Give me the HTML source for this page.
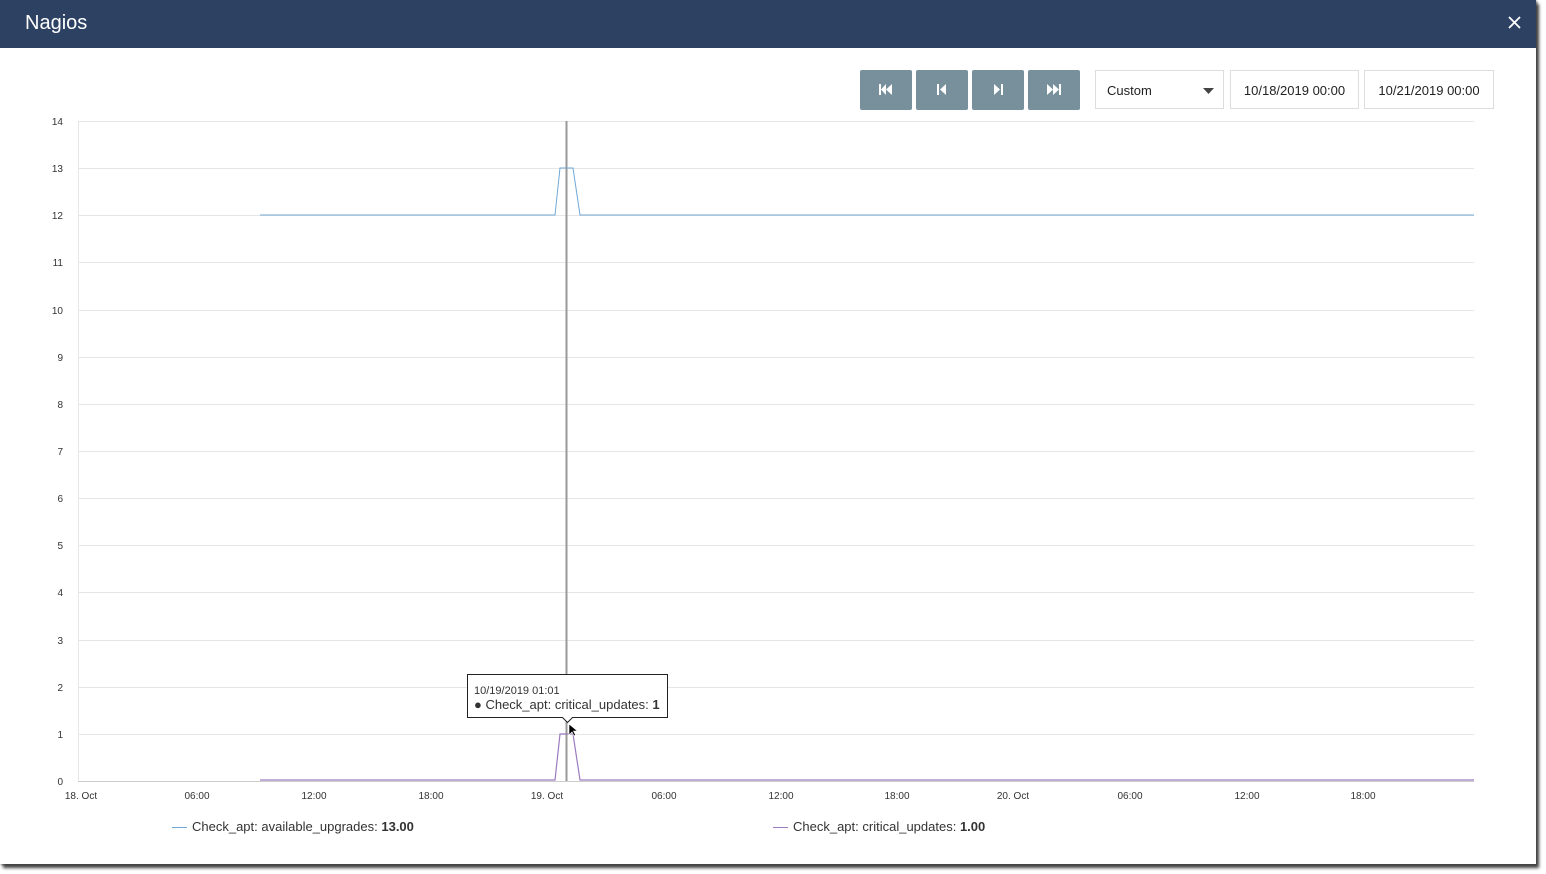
<!DOCTYPE html>
<html><head><meta charset="utf-8"><style>
html,body{margin:0;padding:0;background:#fff;width:1546px;height:874px;overflow:hidden;font-family:"Liberation Sans",sans-serif}
.modal{position:absolute;left:0;top:0;width:1536px;height:864px;background:#fff;box-shadow:3px 4px 3px #444, 1px 1px 2px #666}
.hdr{position:absolute;left:0;top:0;width:1536px;height:48px;background:#2d4163;color:#fff}
.hdr .t{position:absolute;left:25px;top:12px;font-size:20px}
.btn{position:absolute;top:70px;width:52px;height:40px;background:#78909c;border-radius:2px}
.box{position:absolute;top:70px;height:39px;border:1px solid #ddd;font-size:13px;color:#222;line-height:39px;box-sizing:border-box}
</style></head><body>
<div class="modal">
<div class="hdr"><div class="t">Nagios</div><svg style="position:absolute;left:1508px;top:16px" width="13" height="13"><path d="M1 1L12 12M12 1L1 12" stroke="#fff" stroke-width="1.8"/></svg></div>
<div class="btn" style="left:860px"><svg width="52" height="40"><rect x="19" y="14" width="2" height="11" fill="#fff"/><path d="M26 14v11l-5-5.5zM32 14v11l-6-5.5z" fill="#fff"/></svg></div>
<div class="btn" style="left:916px"><svg width="52" height="40"><rect x="21" y="14" width="2" height="11" fill="#fff"/><path d="M30 14v11l-6-5.5z" fill="#fff"/></svg></div>
<div class="btn" style="left:972px"><svg width="52" height="40"><rect x="29" y="14" width="2" height="11" fill="#fff"/><path d="M22 14v11l6-5.5z" fill="#fff"/></svg></div>
<div class="btn" style="left:1028px"><svg width="52" height="40"><rect x="31" y="14" width="2" height="11" fill="#fff"/><path d="M19 14v11l6-5.5zM25 14v11l6-5.5z" fill="#fff"/></svg></div>
<div class="box" style="left:1095px;width:129px;padding-left:11px">Custom<svg style="position:absolute;left:107px;top:17px" width="11" height="6"><path d="M0 0h11l-5.5 6z" fill="#444"/></svg></div>
<div class="box" style="left:1230px;width:129px;text-align:center">10/18/2019 00:00</div>
<div class="box" style="left:1364px;width:130px;text-align:center">10/21/2019 00:00</div>
<svg style="position:absolute;left:0;top:0" width="1536" height="864" font-family="Liberation Sans, sans-serif" font-size="10" fill="#333">
<g stroke="#e6e6e6" stroke-width="1">
<line x1="78" y1="121.5" x2="1474" y2="121.5"/><line x1="78" y1="168.5" x2="1474" y2="168.5"/><line x1="78" y1="215.5" x2="1474" y2="215.5"/><line x1="78" y1="262.5" x2="1474" y2="262.5"/><line x1="78" y1="310.5" x2="1474" y2="310.5"/><line x1="78" y1="357.5" x2="1474" y2="357.5"/><line x1="78" y1="404.5" x2="1474" y2="404.5"/><line x1="78" y1="451.5" x2="1474" y2="451.5"/><line x1="78" y1="498.5" x2="1474" y2="498.5"/><line x1="78" y1="545.5" x2="1474" y2="545.5"/><line x1="78" y1="592.5" x2="1474" y2="592.5"/><line x1="78" y1="640.5" x2="1474" y2="640.5"/><line x1="78" y1="687.5" x2="1474" y2="687.5"/><line x1="78" y1="734.5" x2="1474" y2="734.5"/>
<line x1="78.5" y1="121" x2="78.5" y2="781"/>
</g>
<line x1="78" y1="781.5" x2="1474" y2="781.5" stroke="#ccc"/>
<g text-anchor="end"><text x="63" y="125">14</text><text x="63" y="172">13</text><text x="63" y="219">12</text><text x="63" y="266">11</text><text x="63" y="314">10</text><text x="63" y="361">9</text><text x="63" y="408">8</text><text x="63" y="455">7</text><text x="63" y="502">6</text><text x="63" y="549">5</text><text x="63" y="596">4</text><text x="63" y="644">3</text><text x="63" y="691">2</text><text x="63" y="738">1</text><text x="63" y="785">0</text></g>
<g text-anchor="middle"><text x="81" y="799">18. Oct</text><text x="197" y="799">06:00</text><text x="314" y="799">12:00</text><text x="431" y="799">18:00</text><text x="547" y="799">19. Oct</text><text x="664" y="799">06:00</text><text x="781" y="799">12:00</text><text x="897" y="799">18:00</text><text x="1013" y="799">20. Oct</text><text x="1130" y="799">06:00</text><text x="1247" y="799">12:00</text><text x="1363" y="799">18:00</text></g>
<line x1="566.5" y1="121" x2="566.5" y2="781" stroke="#999" stroke-width="2"/>
<polyline points="260,215 555,215 560,168 573,168 580,215 1474,215" fill="none" stroke="#6fa8d6" stroke-width="1"/>
<polyline points="260,780 555,780 560,734 573,734 580,780 1474,780" fill="none" stroke="#9b7cc0" stroke-width="1.2"/>
<path d="M467.5 674.5h200v43h-95l-5 5-5-5h-95z" fill="#fff" stroke="#222"/>
<text x="474" y="694" font-size="11">10/19/2019 01:01</text>
<text x="474" y="709" font-size="13">● Check_apt: critical_updates: <tspan font-weight="bold">1</tspan></text>
<path d="M569 724v11l3-3 2 4 1.5-1-2-4h4z" fill="#000" stroke="#fff" stroke-width="0.6"/>
<line x1="172" y1="827.5" x2="187" y2="827.5" stroke="#6fa8d6"/>
<text x="192" y="831" font-size="13">Check_apt: available_upgrades: <tspan font-weight="bold">13.00</tspan></text>
<line x1="773" y1="827.5" x2="788" y2="827.5" stroke="#9b7cc0"/>
<text x="793" y="831" font-size="13">Check_apt: critical_updates: <tspan font-weight="bold">1.00</tspan></text>
</svg>
</div>
</body></html>
